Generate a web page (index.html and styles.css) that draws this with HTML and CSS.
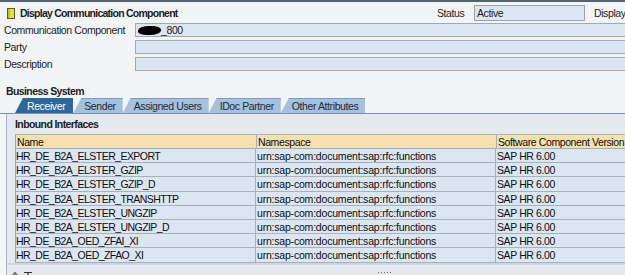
FILE: index.html
```html
<!DOCTYPE html>
<html>
<head>
<meta charset="utf-8">
<link rel="stylesheet" href="styles.css">
</head>
<body>
<div class="topbar"></div>
<div class="page">
  <div class="headrow">
    <div class="title">
      <svg class="ticon" width="8" height="11" viewBox="0 0 8 11"><rect x="0.5" y="0.5" width="7" height="10" fill="#e8e040" stroke="#5a5a10"/><rect x="1" y="1" width="2" height="9" fill="#b8c830"/></svg>
      <span>Display Communication Component</span>
    </div>
    <div class="status">
      <span class="slabel">Status</span>
      <span class="sinput">Active</span>
      <span class="display">Display</span>
    </div>
  </div>
  <div class="form">
    <div class="frow"><span class="flabel">Communication Component</span><span class="finput"><span class="blob"></span>_800</span></div>
    <div class="frow"><span class="flabel">Party</span><span class="finput"></span></div>
    <div class="frow"><span class="flabel">Description</span><span class="finput"></span></div>
  </div>
  <div class="section">Business System</div>
  <div class="tabs">
    <div class="tab active">Receiver</div>
    <div class="tab">Sender</div>
    <div class="tab">Assigned Users</div>
    <div class="tab">IDoc Partner</div>
    <div class="tab">Other Attributes</div>
  </div>
  <div class="panel">
    <div class="ptitle">Inbound Interfaces</div>
    <div class="table">
      <div class="tr th"><div class="c1">Name</div><div class="c2">Namespace</div><div class="c3">Software Component Version</div></div>
      <div class="tr"><div class="c1">HR_DE_B2A_ELSTER_EXPORT</div><div class="c2">urn:sap-com:document:sap:rfc:functions</div><div class="c3">SAP HR 6.00</div></div>
      <div class="tr"><div class="c1">HR_DE_B2A_ELSTER_GZIP</div><div class="c2">urn:sap-com:document:sap:rfc:functions</div><div class="c3">SAP HR 6.00</div></div>
      <div class="tr"><div class="c1">HR_DE_B2A_ELSTER_GZIP_D</div><div class="c2">urn:sap-com:document:sap:rfc:functions</div><div class="c3">SAP HR 6.00</div></div>
      <div class="tr"><div class="c1">HR_DE_B2A_ELSTER_TRANSHTTP</div><div class="c2">urn:sap-com:document:sap:rfc:functions</div><div class="c3">SAP HR 6.00</div></div>
      <div class="tr"><div class="c1">HR_DE_B2A_ELSTER_UNGZIP</div><div class="c2">urn:sap-com:document:sap:rfc:functions</div><div class="c3">SAP HR 6.00</div></div>
      <div class="tr"><div class="c1">HR_DE_B2A_ELSTER_UNGZIP_D</div><div class="c2">urn:sap-com:document:sap:rfc:functions</div><div class="c3">SAP HR 6.00</div></div>
      <div class="tr"><div class="c1">HR_DE_B2A_OED_ZFAI_XI</div><div class="c2">urn:sap-com:document:sap:rfc:functions</div><div class="c3">SAP HR 6.00</div></div>
      <div class="tr"><div class="c1">HR_DE_B2A_OED_ZFAO_XI</div><div class="c2">urn:sap-com:document:sap:rfc:functions</div><div class="c3">SAP HR 6.00</div></div>
    </div>
    <div class="pfoot">
      <svg class="ficons" width="24" height="5" viewBox="0 0 24 5"><path d="M4 0.5 L1.5 3 M4 0.5 L6.5 3 M4 0.5 V5" stroke="#333" stroke-width="1" fill="none"/><path d="M13 0.5 H21 M17 0.5 V5" stroke="#333" stroke-width="1.2" fill="none"/></svg>
      <span class="grip"></span>
    </div>
  </div>
</div>
</body>
</html>
```
FILE: styles.css
```css
html, body {
  margin: 0;
  padding: 0;
  width: 625px;
  height: 275px;
  overflow: hidden;
  background: #f3f4f6;
  font-family: "Liberation Sans", Arial, sans-serif;
  font-size: 10.5px;
  letter-spacing: -0.4px;
  color: #1c1c1c;
}
.topbar {
  height: 2px;
  background: #56636f;
}
.page {
  width: 700px;
}
.headrow {
  display: flex;
  align-items: center;
  height: 20px;
  padding-top: 1px;
}
.title {
  display: flex;
  align-items: center;
  padding-left: 7px;
  font-weight: bold;
  letter-spacing: -0.75px;
  width: 430px;
}
.ticon {
  margin-right: 5px;
}
.status {
  display: flex;
  align-items: center;
}
.slabel {
  width: 37px;
}
.sinput {
  width: 107px;
  height: 14px;
  line-height: 14px;
  background: #dce6f2;
  border: 1px solid #9aa2ad;
  padding-left: 2px;
}
.display {
  margin-left: 9px;
}
.form {
  display: flex;
  flex-direction: column;
  gap: 3px;
}
.frow {
  display: flex;
  align-items: center;
  height: 14px;
}
.flabel {
  width: 131px;
  padding-left: 4px;
  white-space: nowrap;
}
.finput {
  flex: 1;
  height: 12px;
  line-height: 12px;
  background: #dce6f2;
  border: 1px solid #a2a9b2;
  padding-left: 2px;
  display: flex;
  align-items: center;
}
.blob {
  display: inline-block;
  width: 23px;
  height: 9px;
  background: #000;
  border-radius: 50% 40% 50% 40%;
}
.section {
  font-weight: bold;
  letter-spacing: -0.6px;
  padding-left: 6px;
  margin-top: 14px;
  height: 12px;
  line-height: 12px;
}
.tabs {
  display: flex;
  padding-left: 15px;
  margin-top: 1px;
  height: 15px;
  border-bottom: 1px solid #6f93ba;
}
.tab {
  height: 14px;
  line-height: 15px;
  background: #a6c0de;
  border-top: 1px solid #7b9dc6;
  clip-path: polygon(0 100%, 8px 0, 100% 0, 100% 100%);
  padding: 0 7px 0 11px;
  color: #1e2a36;
}
.tab.active {
  background: #2f6898;
  border-top-color: #2f6898;
  color: #fff;
  padding: 0 8px 0 12px;
}
.panel {
  margin-left: 6px;
  background: #e4e9f0;
  border-left: 1px solid #aab4c0;
  padding: 2px 0 0 8px;
}
.ptitle {
  font-weight: bold;
  letter-spacing: -0.6px;
  height: 17px;
  line-height: 17px;
}
.table {
  display: flex;
  flex-direction: column;
  border-top: 1px solid #aab8c8;
  border-left: 1px solid #98a6b6;
  margin-top: 1px;
}
.tr {
  display: flex;
  height: 13.2px;
  line-height: 14px;
  border-bottom: 1px solid #a9b1bb;
  background: #dce6f2;
  color: #0d0d0d;
}
.tr.th {
  background: #f7e0ae;
  height: 13px;
  border-bottom: 1px solid #a0aec0;
}
.tr > div {
  padding-left: 0;
  white-space: nowrap;
  overflow: hidden;
}
.c1 { width: 239px; border-right: 1px solid #a7afb9; letter-spacing: -0.55px; }
.c2 { width: 238px; border-right: 1px solid #a7afb9; letter-spacing: -0.2px; padding-left: 1px !important; }
.c3 { width: 200px; padding-left: 1px !important; }
.th .c1 { padding-left: 1px !important; }
.th .c1, .th .c2 { border-right-color: #9fb0c6; letter-spacing: -0.4px; }
.pfoot {
  height: 12px;
  border-top: 2px solid #cdd4dd;
  margin-left: -8px;
  display: flex;
  align-items: flex-end;
}
.ficons {
  display: block;
  margin-left: 4px;
}
.grip {
  margin-left: 343px;
  margin-bottom: 4px;
  width: 13px;
  height: 1px;
  background: repeating-linear-gradient(90deg, #666 0 1px, transparent 1px 3px);
}
```
